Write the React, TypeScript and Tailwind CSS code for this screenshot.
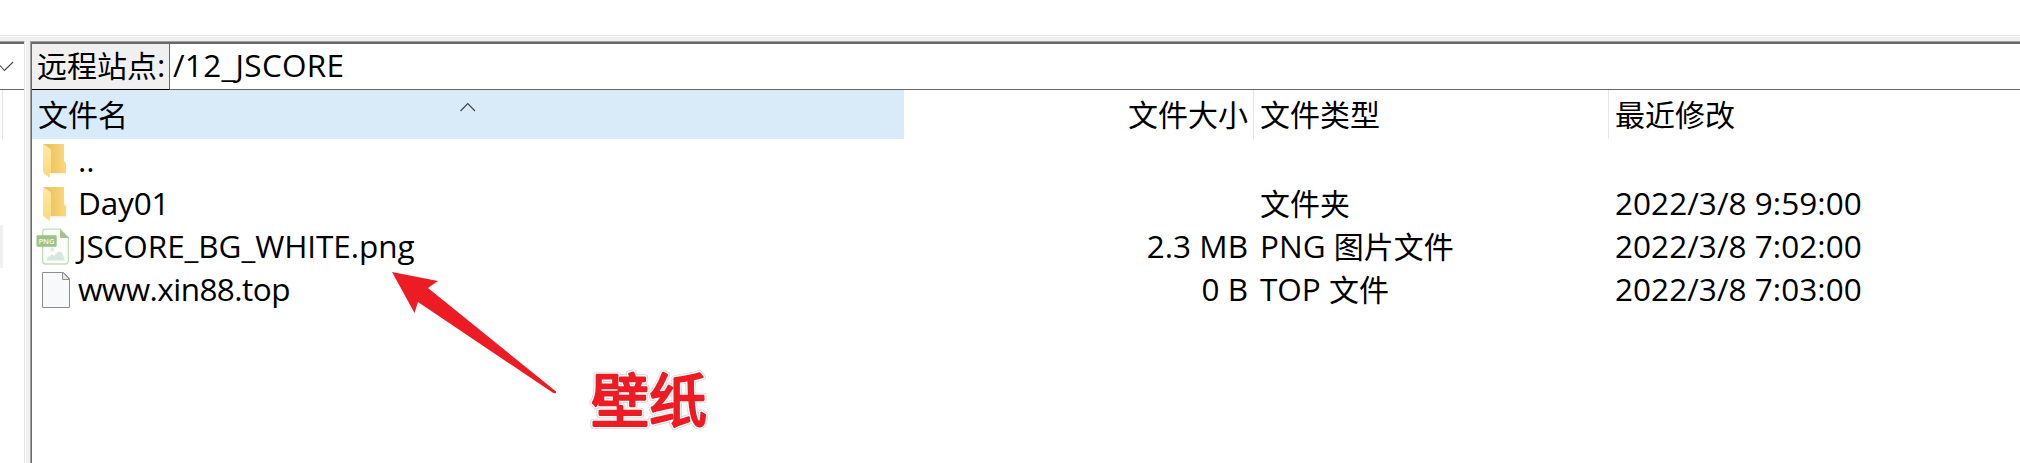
import type { ReactNode } from "react";

const Latin = ({ children, className = "" }: { children: ReactNode; className?: string }) => (
  <span className={`font-['Open_Sans','Noto_Sans',sans-serif] text-[31.5px] ${className}`}>{children}</span>
);

const FolderIcon = () => (
  <svg viewBox="0 0 36 38" className="h-[38px] w-9 shrink-0">
    <defs>
      <linearGradient id="back" x1="0" x2="1">
        <stop offset="0.3" stopColor="#ecc565" />
        <stop offset="1" stopColor="#fcd878" />
      </linearGradient>
      <linearGradient id="front" x1="0" x2="0" y2="1">
        <stop offset="0" stopColor="#ffe9a6" />
        <stop offset="1" stopColor="#fbd977" />
      </linearGradient>
    </defs>
    <path d="M13 31H31L29 32.5H14Z" fill="#f1f1f1" />
    <path d="M7 2H28V19.5L30 21V31H14Z" fill="url(#back)" />
    <path d="M7 2L14 6.500Q15 7.500 15 9V31H13.800V36L8 31.500Q7 30.500 7 29Z" fill="url(#front)" />
  </svg>
);

const PngIcon = () => (
  <svg viewBox="0 0 36 38" className="h-[38px] w-9 shrink-0">
    <path d="M9.500 1.200H24L32.400 9.500V32.500Q32.400 36 29.500 36H9.500Q6.600 36 6.600 33V4.200Q6.600 1.200 9.500 1.200Z" fill="#fbfdfb" stroke="#c5dcb9" strokeWidth="1.3" />
    <path d="M24 1L33 10H24Z" fill="#a3c68d" />
    <circle cx="16.300" cy="21.500" r="1.900" fill="#dcebe4" />
    <path d="M11 32.500Q10.500 29 14 28Q16 25.500 18 28L22 24Q24.500 22.500 26.500 26L28.500 30.500V32.500Z" fill="#d5e8e0" />
    <rect x="0.500" y="7.300" width="20.200" height="11.500" rx="1.200" fill="#9bc184" />
    <text x="10.500" y="15.900" textAnchor="middle" fontFamily="Open Sans, sans-serif" fontSize="7.600" fontWeight="600" fill="#f4f9f1">PNG</text>
  </svg>
);

const PageIcon = () => (
  <svg viewBox="0 0 36 38" className="h-[38px] w-9 shrink-0">
    <path d="M6.500 1.500H27.500L33.500 7.500V36.500H6.500Z" fill="#f8f9fb" stroke="#8e8e8e" />
    <path d="M26.500 1.500V8.500H33.500L27 1.500Z" fill="#e6e8ea" stroke="#8e8e8e" />
  </svg>
);

type Row = { icon: ReactNode; name: string; spacing?: string; size: string; type: ReactNode; date: string };

const rows: Row[] = [
  { icon: <FolderIcon />, name: "..", size: "", type: "", date: "" },
  { icon: <FolderIcon />, name: "Day01", spacing: "tracking-[-0.15px]", size: "", type: "文件夹", date: "2022/3/8 9:59:00" },
  { icon: <PngIcon />, name: "JSCORE_BG_WHITE.png", spacing: "tracking-[-0.07px]", size: "2.3 MB", type: <><Latin>PNG </Latin>图片文件</>, date: "2022/3/8 7:02:00" },
  { icon: <PageIcon />, name: "www.xin88.top", spacing: "tracking-[-0.55px]", size: "0 B", type: <><Latin>TOP </Latin>文件</>, date: "2022/3/8 7:03:00" },
];

const grid = "grid grid-cols-[872px_350px_355px_1fr]";

const Annotation = () => (
  <svg className="pointer-events-none absolute top-[260px] left-[380px] h-[190px] w-[340px]" viewBox="380 260 340 190">
    <path d="M392 272L438 281L428 288L555.500 391Q557 392.500 555 393.300Q554 393.500 552.500 392.500L418 302L414.500 313Z" fill="#ed1c24" />
    <g fontFamily="Noto Sans CJK SC, sans-serif" fontSize="58" fontWeight="400" strokeLinejoin="round" strokeLinecap="round">
      <text x="591" y="421.500" fill="#d6d6d6" stroke="#d6d6d6" strokeWidth="6.500">壁纸</text>
      <text x="591" y="421.500" fill="#fff" stroke="#fff" strokeWidth="4.800">壁纸</text>
      <text x="591" y="421.500" fill="#ed1c24" stroke="#ed1c24" strokeWidth="2.300">壁纸</text>
    </g>
  </svg>
);

export default function App() {
  return (
    <div className="relative flex h-[463px] w-[2020px] flex-col overflow-hidden bg-white font-['Noto_Sans_CJK_SC',sans-serif] text-[30px] whitespace-pre text-black">
      <div className="mb-px h-[36px] shrink-0 border-b border-[#e3e3e3]" />
      <div className="flex min-h-0 flex-1 bg-[#f0f0f0] pt-1">
        <div className="flex w-[25px] shrink-0 flex-col border-t border-r border-t-[#a0a0a0] border-r-[#e3e3e3] bg-white">
          <div className="flex h-[48px] shrink-0 items-center border-t-2 border-b border-[#696969]">
            <svg viewBox="0 0 14 11" className="h-[11px] w-[14px]" fill="none" stroke="#444" strokeWidth="1.1">
              <path d="M0 4.500L4.500 9.500L13 1" />
            </svg>
          </div>
          <div className="h-[49px] w-[3px] shrink-0 border-r border-[#e5e5e5]" />
          <div className="mt-[86px] h-[43px] w-[3px] shrink-0 bg-[#f0f0f0]" />
        </div>
        <div className="w-px bg-white" />
        <div className="ml-1 flex flex-1 flex-col border-t border-l border-[#a0a0a0] bg-white">
          <div className="flex flex-1 flex-col border-t-2 border-l border-[#696969]">
            <div className="flex h-[46px] leading-[40px]">
              <div className="w-[138px] border-r border-b border-r-[#696969] border-b-black bg-[#f0f0f0] pl-[5px]">远程站点<Latin>:</Latin></div>
              <div className="flex-1 border-b border-[#696969] pl-[3px]"><Latin className="tracking-[0.3px]">/12_JSCORE</Latin></div>
            </div>
            <div className={`${grid} h-[49px] leading-[47px]`}>
              <div className="flex bg-[#d9eaf9] pl-[6px]">
                <span className="w-[422px]">文件名</span>
                <svg viewBox="0 0 16 10" className="mt-[12px] h-2.5 w-4" fill="none" stroke="#444" strokeWidth="1.2">
                  <path d="M0.500 9L7.800 1.500L15 9" />
                </svg>
              </div>
              <div className="border-r border-[#e5e5e5] pr-[5px] text-right">文件大小</div>
              <div className="border-r border-[#e5e5e5] pl-[6px]">文件类型</div>
              <div className="pl-[6px]">最近修改</div>
            </div>
            <div className="pt-[3px]">
              {rows.map((r) => (
                <div key={r.name} className={`${grid} h-[43px] leading-[34px]`}>
                  <div className="flex pl-1 leading-[35px]">
                    <div className="mr-[6px]">{r.icon}</div>
                    <Latin className={r.spacing}>{r.name}</Latin>
                  </div>
                  <div className="pr-1.5 text-right"><Latin>{r.size}</Latin></div>
                  <div className="pl-[6px]">{r.type}</div>
                  <div className="pl-[6px]"><Latin className="tracking-[0.05px]">{r.date}</Latin></div>
                </div>
              ))}
            </div>
          </div>
        </div>
      </div>
      <Annotation />
    </div>
  );
}
